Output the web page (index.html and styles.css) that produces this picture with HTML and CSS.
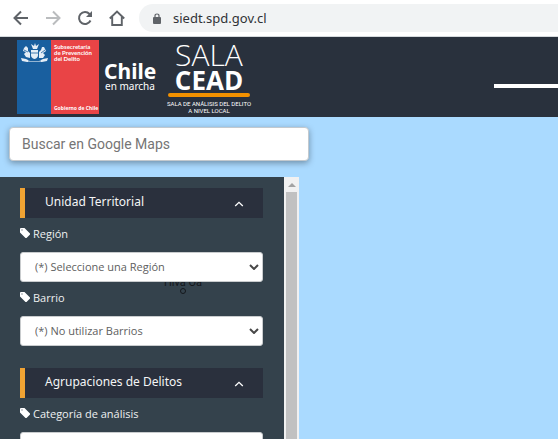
FILE: index.html
```
<!DOCTYPE html>
<html lang="es">
<head>
<meta charset="utf-8">
<meta name="viewport" content="width=device-width, initial-scale=1">
<title>Sala CEAD</title>
<link rel="stylesheet" href="styles.css">
</head>
<body>
<svg class="defs" aria-hidden="true">
  <symbol id="tag" viewBox="0 0 10 10"><path d="M0 1Q0 0 1 0H4.500L10 5.500V6.500L6.500 10H5.500L0 4.500ZM1.500 1.500V2.500H2.500V1.500Z" fill="#fff" fill-rule="evenodd"/></symbol>
  <symbol id="up" viewBox="0 0 10 6"><path d="M1.200 5L5 1.300 8.800 5" fill="none" stroke="#fff" stroke-width="1.300"/></symbol>
</svg>
<nav class="toolbar">
  <button class="nav-btn" aria-label="Atrás"><svg viewBox="0 0 16 16"><path d="M15 8H2M8 1.500L1.500 8 8 14.500" fill="none" stroke="#5f6368" stroke-width="2"/></svg></button>
  <button class="nav-btn" aria-label="Adelante"><svg viewBox="0 0 16 16"><path d="M1 8H14M8 1.500L14.500 8 8 14.500" fill="none" stroke="#babcbe" stroke-width="2"/></svg></button>
  <button class="nav-btn" aria-label="Recargar"><svg viewBox="0 0 16 16"><path d="M13.500 10.500A6 6 0 1 1 12.500 4L13.500 5.200" fill="none" stroke="#5f6368" stroke-width="2"/><path d="M15 1V7H9Z" fill="#5f6368"/></svg></button>
  <button class="nav-btn" aria-label="Inicio"><svg viewBox="0 0 16 16"><path d="M.8 8.500L8 1.500 15.200 8.500M3.200 7V15H12.800V7" fill="none" stroke="#5f6368" stroke-width="1.900"/></svg></button>
  <div class="address">
    <svg class="lock" viewBox="0 0 8 11"><path d="M2 5V2.700Q2 1 4 1T6 2.700V5" fill="none" stroke="#5f6368" stroke-width="1.200"/><rect y="4" width="8" height="7" rx="1" fill="#5f6368"/></svg>
    <span>siedt.spd.gov.cl</span>
  </div>
</nav>
<header class="header">
  <svg class="logo-gob" viewBox="0 0 144 74" role="img" aria-label="Gobierno de Chile">
    <rect width="34" height="74" fill="#195f9f"/>
    <rect x="34" width="48" height="74" fill="#e94446"/>
    <g fill="#e4edf6">
      <path d="M14 10H21V15Q21 18 17.500 19 14 18 14 15Z"/>
      <path d="M16 9L14 4 17 6 18 3 19 6 22 4 20 9Z"/>
      <path d="M13 18L9 17 7 14 9 12 6 11 7 8 9 6 11 8 11 11 13 13ZM22 18L26 18 28 15 26 13 29 11 27 7 25 7 24 10 22 12Z"/>
      <path d="M4 18L9 19 13 21H22L26 19 31 18 30 21 25 22H10L5 21Z"/>
    </g>
    <path d="M14 13H21M7 10L11 12M28 10L24 13M11 21H24" stroke="#195f9f" stroke-width=".8"/>
    <g class="logo-small"><text x="37" y="9">Subsecretaría</text><text x="37" y="15">de Prevención</text><text x="37" y="21">del Delito</text></g>
    <text class="logo-foot" x="37" y="70">Gobierno de Chile</text>
    <text class="chile" x="87" y="39">Chile</text>
    <text class="marcha" x="88" y="50">en marcha</text>
  </svg>
  <svg class="logo-cead" viewBox="0 0 84 74" role="img" aria-label="Sala CEAD">
    <text class="sala" x="42" y="26">SALA</text>
    <text class="cead" x="42" y="50">CEAD</text>
    <path d="M3 55H81" stroke="#f29100" stroke-width="4" stroke-linecap="round"/>
    <g class="caption"><text x="42" y="66">SALA DE ANÁLISIS DEL DELITO</text><text x="42" y="73">A NIVEL LOCAL</text></g>
  </svg>
  <div class="header-line"></div>
</header>
<main class="map">
  <input class="search" type="text" placeholder="Buscar en Google Maps" aria-label="Buscar en Google Maps">
  <aside class="sidebar">
    <div class="panel">
      <section class="group">
        <button class="group-title">Unidad Territorial<svg class="chevron"><use href="#up"/></svg></button>
        <div class="field">
          <label for="region"><svg class="tag"><use href="#tag"/></svg>Región</label>
          <div class="select-wrap"><select id="region"><option>(*) Seleccione una Región</option></select><svg class="arrow" viewBox="0 0 10 6"><path d="M1 1L5 5 9 1" fill="none" stroke="#484848" stroke-width="2"/></svg></div>
          <div class="place">Hiva Oa</div>
        </div>
        <div class="field">
          <label for="barrio"><svg class="tag"><use href="#tag"/></svg>Barrio</label>
          <div class="select-wrap"><select id="barrio"><option>(*) No utilizar Barrios</option></select><svg class="arrow" viewBox="0 0 10 6"><path d="M1 1L5 5 9 1" fill="none" stroke="#484848" stroke-width="2"/></svg></div>
        </div>
      </section>
      <section class="group">
        <button class="group-title">Agrupaciones de Delitos<svg class="chevron"><use href="#up"/></svg></button>
        <div class="field">
          <label for="categoria"><svg class="tag"><use href="#tag"/></svg>Categoría de análisis</label>
          <div class="select-wrap"><select id="categoria"><option></option></select></div>
        </div>
      </section>
    </div>
    <div class="scrollbar"><svg class="scroll-up" viewBox="0 0 8 4"><path d="M0 4L4 0 8 4Z" fill="#a3a3a3"/></svg><div class="thumb"></div></div>
  </aside>
</main>
</body>
</html>
```
FILE: styles.css
```
* { box-sizing: border-box; }
body {
  margin: 0;
  height: 100vh;
  overflow: hidden;
  display: flex;
  flex-direction: column;
  font-family: "Noto Sans", sans-serif;
  background: #aadaff;
}
button { border: 0; padding: 0; font: inherit; background: none; }
.defs { display: none; }

.toolbar {
  flex: none;
  display: flex;
  align-items: center;
  gap: 16px;
  height: 37px;
  padding-left: 13px;
  background: #fff;
  border-bottom: 1px solid #d5dadd;
}
.nav-btn { width: 16px; height: 16px; }
.nav-btn svg { display: block; width: 16px; height: 16px; }
.address {
  flex: 1;
  display: flex;
  align-items: center;
  gap: 12px;
  height: 28px;
  margin-left: -2px;
  padding-left: 14px;
  border-radius: 14px 0 0 14px;
  background: #f1f3f4;
  color: #303236;
  font-size: 13px;
}
.lock { width: 8px; height: 11px; }

.header {
  flex: none;
  display: flex;
  align-items: center;
  height: 80px;
  padding-left: 17px;
  background: #29313d;
}
.logo-gob { width: 144px; height: 74px; }
.logo-cead { width: 84px; height: 74px; margin-left: 6px; overflow: visible; }
.logo-gob text { fill: #fff; }
.logo-small { font: 700 6px Lato, sans-serif; }
.logo-foot { font: 700 5px "Noto Sans", sans-serif; }
.chile { font-size: 21px; font-weight: 700; }
.marcha { font-size: 10px; }
.logo-cead text { fill: #fff; text-anchor: middle; }
.sala { font: 300 30px "Open Sans", sans-serif; }
.cead { font: 700 26px "Open Sans", sans-serif; }
.caption { font: 6px Roboto, sans-serif; }
.header-line { width: 64px; height: 4px; margin: 18px 0 0 auto; background: #fff; }

.map { flex: 1; min-height: 0; display: flex; flex-direction: column; }
.search {
  flex: none;
  width: 300px;
  height: 34px;
  margin: 10px 9px 16px;
  padding: 0 12px;
  border: 1px solid #c3c9ce;
  border-radius: 4px;
  background: #fff;
  box-shadow: 0 2px 6px rgba(0, 0, 0, .35);
  font: 14px Roboto, sans-serif;
}
.search::placeholder { color: #757575; }

.sidebar { flex: 1; min-height: 0; display: flex; width: 299px; }
.panel { flex: 1; overflow: hidden; padding: 11px 21px 0 20px; background: #34424c; }
.group { margin-bottom: 22px; }
.group-title {
  display: flex;
  align-items: center;
  justify-content: space-between;
  width: 100%;
  height: 30px;
  padding: 0 19px 4px 20px;
  border-left: 5px solid #f0a333;
  background: #2a303d;
  color: #f4f5f6;
  font-size: 12px;
}
.chevron { width: 10px; height: 6px; margin-top: 6px; }
.field { position: relative; }
.field label {
  display: flex;
  align-items: center;
  gap: 3px;
  height: 34px;
  padding-bottom: 4px;
  color: #eef0f1;
  font: 11px "Open Sans", sans-serif;
}
.tag { width: 10px; height: 10px; }
.select-wrap { position: relative; z-index: 1; }
select {
  display: block;
  appearance: none;
  width: 100%;
  height: 30px;
  padding: 0 14px 2px;
  border: 1px solid #c9ccce;
  border-radius: 3px;
  background: #fff;
  color: #606060;
  font: 11px "Open Sans", sans-serif;
}
.arrow { position: absolute; right: 4px; top: 12px; width: 10px; height: 6px; pointer-events: none; }
.place {
  position: absolute;
  left: 144px;
  top: 57px;
  color: #14181c;
  font: 11px/16px Roboto, sans-serif;
}
.place::after {
  content: "";
  position: absolute;
  left: 16px;
  top: 13px;
  width: 4px;
  height: 4px;
  border: 1px solid #14181c;
  border-radius: 50%;
}
.scrollbar {
  flex: none;
  display: flex;
  flex-direction: column;
  align-items: center;
  width: 15px;
  background: #f1f1f1;
}
.scroll-up { flex: none; width: 8px; height: 4px; margin: 6px 0 5px; }
.thumb { flex: 1; width: 11px; background: #c1c1c1; }
```
